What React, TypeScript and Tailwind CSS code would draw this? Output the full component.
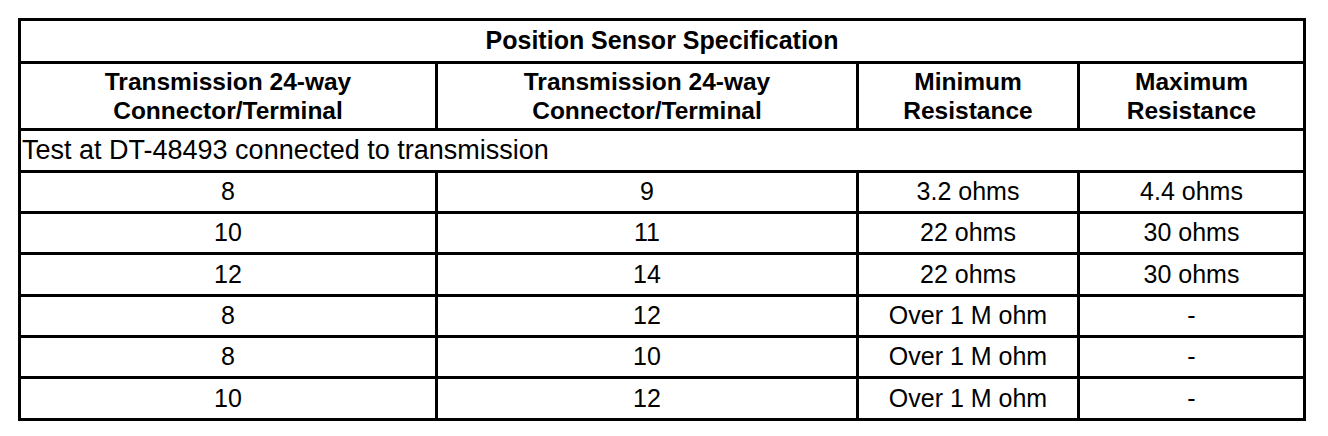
import React from "react";

const rows: [string, string, string, string, number][] = [
  ["8", "9", "3.2 ohms", "4.4 ohms", 38],
  ["10", "11", "22 ohms", "30 ohms", 38],
  ["12", "14", "22 ohms", "30 ohms", 39],
  ["8", "12", "Over 1 M ohm", "-", 38],
  ["8", "10", "Over 1 M ohm", "-", 38],
  ["10", "12", "Over 1 M ohm", "-", 39],
];

const cols = "grid grid-cols-[414px_421px_221px_226px]";

export default function App() {
  return (
    <div
      className="w-[1328px] h-[436px] bg-white pt-[18px] pl-[18px] text-black"
      style={{ fontFamily: '"Liberation Sans", Arial, sans-serif' }}
    >
      <div className="w-[1288px] border-[3px] border-black">
        <div className="h-[40px] flex items-center justify-center font-bold text-[25px]">
          Position Sensor Specification
        </div>
        <div className={`${cols} h-[67px] border-t-[3px] border-black font-bold text-[24.5px] leading-[29px]`}>
          <div className="flex items-center justify-center text-center">
            Transmission 24-way
            <br />
            Connector/Terminal
          </div>
          <div className="flex items-center justify-center text-center border-l-[3px] border-black">
            Transmission 24-way
            <br />
            Connector/Terminal
          </div>
          <div className="flex items-center justify-center text-center border-l-[3px] border-black">
            Minimum
            <br />
            Resistance
          </div>
          <div className="flex items-center justify-center text-center border-l-[3px] border-black">
            Maximum
            <br />
            Resistance
          </div>
        </div>
        <div className="h-[42px] border-t-[3px] border-black flex items-center pl-[1px] text-[27px]">
          Test at DT-48493 connected to transmission
        </div>
        {rows.map((r, i) => (
          <div
            key={i}
            className={`${cols} border-t-[3px] border-black text-[25px]`}
            style={{ height: r[4] + 3 }}
          >
            <div className="flex items-center justify-center">{r[0]}</div>
            <div className="flex items-center justify-center border-l-[3px] border-black">{r[1]}</div>
            <div className="flex items-center justify-center border-l-[3px] border-black">{r[2]}</div>
            <div className="flex items-center justify-center border-l-[3px] border-black">{r[3]}</div>
          </div>
        ))}
      </div>
    </div>
  );
}
